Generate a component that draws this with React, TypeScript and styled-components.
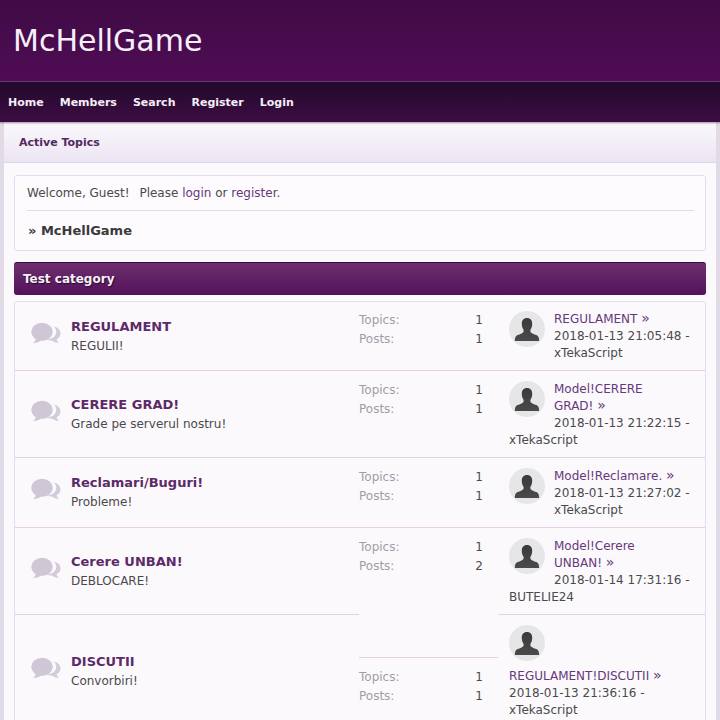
import styled, { createGlobalStyle } from 'styled-components';

const GlobalStyle = createGlobalStyle`
  html, body {
    margin: 0;
    padding: 0;
    height: 720px;
    overflow: hidden;
    background: #e2dbe6;
  }
  body {
    font-family: "DejaVu Sans", sans-serif;
    font-size: 12px;
    color: #333;
  }
  a {
    color: #66387a;
    text-decoration: none;
  }
`;

const Header = styled.header`
  box-sizing: border-box;
  height: 82px;
  padding: 21px 13px 0;
  background: linear-gradient(to bottom, #3f0b45, #500c55);
  border-bottom: 1px solid #6a3a70;
`;

const Title = styled.h1`
  margin: 0;
  font-size: 30px;
  line-height: 40px;
  font-weight: 400;
  color: #f6eff8;
`;

const Nav = styled.nav`
  height: 40px;
  box-sizing: border-box;
  padding: 1px 0 0 8px;
  display: flex;
  align-items: center;
  gap: 16px;
  background: linear-gradient(to bottom, #210a2b, #3d0c43);
  box-shadow: 0 1px 2px rgba(60, 30, 70, 0.5);
  position: relative;
`;

const NavLink = styled.a`
  font-size: 11px;
  font-weight: 700;
  color: #f4eef6;
`;

const Page = styled.main`
  margin: 0 4px;
  background: #fcf9fd;
`;

const SubBar = styled.div`
  height: 41px;
  box-sizing: border-box;
  padding-left: 15px;
  display: flex;
  align-items: center;
  background: linear-gradient(to bottom, #fbf9fc, #ebe5f2);
  border-bottom: 1px solid #e0d5e6;
  font-size: 11px;
  font-weight: 700;
  color: #512a60;
`;

const Content = styled.div`
  padding: 12px 10px 0;
`;

const WelcomeCard = styled.section`
  border: 1px solid #e8dcea;
  border-radius: 3px;
  padding: 0 11px 0 12px;
  height: 76px;
  box-sizing: border-box;
  background: #fdfbfe;
`;

const WelcomeLine = styled.div`
  height: 34px;
  line-height: 34px;
  font-size: 12px;
  color: #4a4a4a;
  border-bottom: 1px solid #e8d6e9;
`;

const Please = styled.span`
  margin-left: 6px;
`;

const Crumb = styled.div`
  padding-left: 1px;
  line-height: 40px;
  font-size: 13px;
  font-weight: 700;
  color: #3a3a3a;
`;

const CategoryBar = styled.div`
  margin-top: 11px;
  height: 33px;
  box-sizing: border-box;
  padding-left: 9px;
  display: flex;
  align-items: center;
  border-radius: 3px;
  border-top: 1px solid #32103a;
  background: linear-gradient(to bottom, #6e2f70, #53115a);
  font-size: 12px;
  font-weight: 700;
  color: #f6f0f7;
  text-shadow: 1px 1px 1px #2a0a30;
`;

const BoardCard = styled.section`
  margin-top: 6px;
  border: 1px solid #e8dcea;
  border-radius: 3px 3px 0 0;
  background: #fcf9fd;
`;

const Row = styled.div`
  display: flex;
  align-items: stretch;
`;

const rowLine = '1px solid #e8cfe8';

const InfoCol = styled.div<{ $first: boolean }>`
  width: 344px;
  flex: none;
  box-sizing: border-box;
  padding-left: 16px;
  display: flex;
  align-items: center;
  gap: 10px;
  border-top: ${(p) => (p.$first ? 'none' : rowLine)};
`;

const BoardIcon = styled.svg`
  width: 30px;
  height: 24px;
  flex: none;
  margin-top: -5px;
`;

const BoardName = styled.a`
  display: block;
  font-size: 13px;
  line-height: 19px;
  font-weight: 700;
  color: #5c2a68;
`;

const BoardDesc = styled.div`
  margin-top: 1px;
  font-size: 12px;
  line-height: 19px;
  color: #4a4a4a;
`;

const StatsCol = styled.div<{ $drop: number; $first: boolean }>`
  width: 139px;
  flex: none;
  align-self: flex-start;
  box-sizing: border-box;
  margin-top: ${(p) => p.$drop}px;
  padding: ${(p) => (p.$first ? 9 : 10)}px 15px 0 0;
  border-top: ${(p) => (p.$first ? 'none' : rowLine)};
`;

const StatLine = styled.div`
  display: flex;
  justify-content: space-between;
  line-height: 19px;
  font-size: 12px;
  color: #4a4a4a;
`;

const StatLabel = styled.span`
  color: #a29ca6;
`;

const LastCol = styled.div<{ $first: boolean }>`
  flex: 1;
  box-sizing: border-box;
  padding: ${(p) => (p.$first ? 9 : 10)}px 11px 8px;
  font-size: 12px;
  line-height: 17px;
  color: #4a4a4a;
  border-top: ${(p) => (p.$first ? 'none' : rowLine)};
`;

const Avatar = styled.svg`
  float: left;
  width: 36px;
  height: 36px;
  margin: 0 9px 7px 0;
`;

const Raquo = styled.span`
  font-size: 14px;
  line-height: 12px;
`;

const boards = [
  { name: 'REGULAMENT', desc: 'REGULII!', topics: 1, posts: 1, last: 'REGULAMENT', when: '2018-01-13 21:05:48', who: 'xTekaScript', drop: 0 },
  { name: 'CERERE GRAD!', desc: 'Grade pe serverul nostru!', topics: 1, posts: 1, last: 'Model!CERERE GRAD!', when: '2018-01-13 21:22:15', who: 'xTekaScript', drop: 0 },
  { name: 'Reclamari/Buguri!', desc: 'Probleme!', topics: 1, posts: 1, last: 'Model!Reclamare.', when: '2018-01-13 21:27:02', who: 'xTekaScript', drop: 0 },
  { name: 'Cerere UNBAN!', desc: 'DEBLOCARE!', topics: 1, posts: 2, last: 'Model!Cerere UNBAN!', when: '2018-01-14 17:31:16', who: 'BUTELIE24', drop: 0 },
  { name: 'DISCUTII', desc: 'Convorbiri!', topics: 1, posts: 1, last: 'REGULAMENT!DISCUTII', when: '2018-01-13 21:36:16', who: 'xTekaScript', drop: 43 },
];

const ChatIcon = () => (
  <BoardIcon viewBox="0 0 30 24">
    <path
      d="M20 4.500c5-.6 9.500 2.300 9.500 6.800 0 2.800-1.600 4.900-4 6 .3 1.500 1.300 2.600 2.500 3.400-2.800 0-5.400-.8-7-2.300-2 .2-3.700-.1-5-.8 5.200-.4 9.300-3.600 9.300-7.900 0-2-.9-3.700-2.300-5.200z"
      fill="#d3cbd9"
    />
    <ellipse cx="11" cy="9.800" rx="10.800" ry="9" fill="#cfc6d6" />
    <path d="M5 16c-.2 2-1.200 3.800-2.800 5.200 3.400-.2 6.500-1.400 8.300-3.200z" fill="#cfc6d6" />
  </BoardIcon>
);

const AvatarIcon = ({ id }: { id: string }) => (
  <Avatar viewBox="0 0 36 36">
    <defs>
      <linearGradient id={id} x1="0" y1="0" x2="0" y2="1">
        <stop offset="0" stopColor="#3a3a3a" />
        <stop offset="1" stopColor="#4a4a4a" />
      </linearGradient>
    </defs>
    <circle cx="18" cy="18" r="18" fill="#e6e6e8" />
    <path
      d="M18 7c3.400 0 5.200 2.200 5.200 5.800 0 2.200-.5 4-1.300 5.200-.7 1.100-.7 2.400-.2 3.200.9 1.300 3.300 2 5.500 2.700 2 .7 2.800 2.100 3 6.100H5.800c.2-4 1-5.400 3-6.100 2.200-.7 4.600-1.400 5.500-2.700.5-.8.500-2.100-.2-3.200-.8-1.200-1.300-3-1.300-5.200C12.800 9.200 14.600 7 18 7z"
      fill={`url(#${id})`}
    />
  </Avatar>
);

export default function App() {
  return (
    <>
      <GlobalStyle />
      <Header>
        <Title>McHellGame</Title>
      </Header>
      <Nav>
        <NavLink href="#">Home</NavLink>
        <NavLink href="#">Members</NavLink>
        <NavLink href="#">Search</NavLink>
        <NavLink href="#">Register</NavLink>
        <NavLink href="#">Login</NavLink>
      </Nav>
      <Page>
        <SubBar>Active Topics</SubBar>
        <Content>
          <WelcomeCard>
            <WelcomeLine>
              Welcome, Guest! <Please>Please</Please> <a href="#">login</a> or <a href="#">register</a>.
            </WelcomeLine>
            <Crumb>» McHellGame</Crumb>
          </WelcomeCard>
          <CategoryBar>Test category</CategoryBar>
          <BoardCard>
            {boards.map((b, i) => (
              <Row key={b.name}>
                <InfoCol $first={i === 0}>
                  <ChatIcon />
                  <div>
                    <BoardName href="#">{b.name}</BoardName>
                    <BoardDesc>{b.desc}</BoardDesc>
                  </div>
                </InfoCol>
                <StatsCol $drop={b.drop} $first={i === 0}>
                  <StatLine>
                    <StatLabel>Topics:</StatLabel>
                    {b.topics}
                  </StatLine>
                  <StatLine>
                    <StatLabel>Posts:</StatLabel>
                    {b.posts}
                  </StatLine>
                </StatsCol>
                <LastCol $first={i === 0}>
                  <AvatarIcon id={`avatar-${i}`} />
                  <a href="#">
                    {b.last}&nbsp;<Raquo>»</Raquo>
                  </a>
                  <br />
                  {b.when} - {b.who}
                </LastCol>
              </Row>
            ))}
          </BoardCard>
        </Content>
      </Page>
    </>
  );
}
